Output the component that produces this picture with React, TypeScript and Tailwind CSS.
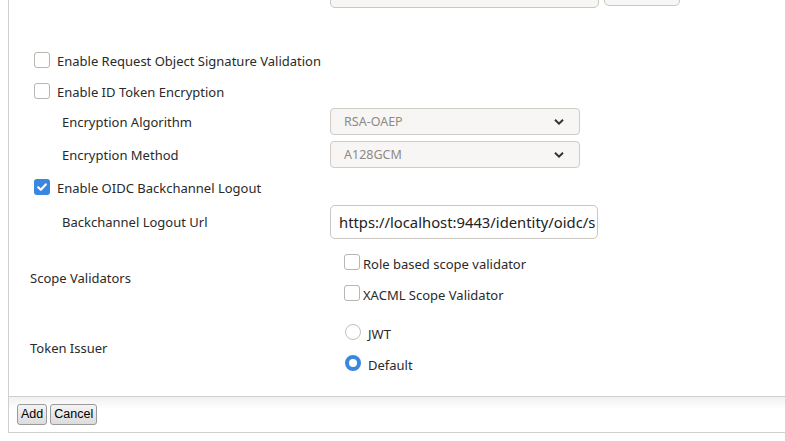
import React from "react";

const font = { fontFamily: '"Noto Sans", "Open Sans", sans-serif' };

function Box({ checked = false }: { checked?: boolean }) {
  if (checked) {
    return (
      <span className="inline-flex h-[16px] w-[16px] shrink-0 items-center justify-center rounded-[3px] bg-[#3b86e0]">
        <svg width="12" height="12" viewBox="0 0 12 12">
          <path d="M2.2 6.3 L4.8 8.8 L9.8 3.4" fill="none" stroke="white" strokeWidth="2.2" strokeLinecap="round" strokeLinejoin="round" />
        </svg>
      </span>
    );
  }
  return <span className="inline-block h-[16px] w-[16px] shrink-0 rounded-[3px] border border-[#b9b5b0] bg-white" />;
}

function Radio({ checked = false }: { checked?: boolean }) {
  if (checked) {
    return <span className="inline-block h-[16px] w-[16px] shrink-0 rounded-full border-[4.5px] border-[#3b86e0] bg-white" />;
  }
  return <span className="inline-block h-[16px] w-[16px] shrink-0 rounded-full border border-[#c2beb9] bg-white" />;
}

function Select({ value }: { value: string }) {
  return (
    <div className="flex h-[27px] w-[250px] items-center justify-between rounded-[4px] border border-[#cfcbc6] bg-[#f7f6f4] pl-[13px] pr-[14px] text-[12.5px] text-[#8d8a86]">
      <span>{value}</span>
      <svg width="12" height="8" viewBox="0 0 12 8">
        <path d="M2 1.8 L6 5.6 L10 1.8" fill="none" stroke="#333" strokeWidth="2" />
      </svg>
    </div>
  );
}

export default function App() {
  return (
    <div className="h-[441px] w-[785px] overflow-hidden bg-white text-[13px] leading-[20px] text-[#2a2a2a]" style={font}>
      <div className="ml-[8px] flex h-[433px] flex-col border-b border-l border-[#cfcfcf]">
        {/* top partial row */}
        <div className="mt-[-20px] flex h-[28px] shrink-0 items-start gap-[5px] pl-[321px]">
          <div className="h-[28px] w-[269px] rounded-[5px] border border-[#cac6c1] bg-[#f7f6f4]" />
          <div className="h-[26px] w-[76px] rounded-[5px] border border-[#cac6c1] bg-[#f7f6f4]" />
        </div>

        <div className="mt-[42px] flex h-[20px] shrink-0 items-center gap-[7px] pl-[25px]">
          <Box />
          <span className="mt-[2px]">Enable Request Object Signature Validation</span>
        </div>
        <div className="mt-[11px] flex h-[20px] shrink-0 items-center gap-[7px] pl-[25px]">
          <Box />
          <span className="mt-[2px]">Enable ID Token Encryption</span>
        </div>

        <div className="mt-[7px] flex h-[27px] shrink-0 items-center">
          <span className="w-[321px] pl-[53px]">Encryption Algorithm</span>
          <Select value="RSA-OAEP" />
        </div>
        <div className="mt-[6px] flex h-[27px] shrink-0 items-center">
          <span className="w-[321px] pl-[53px]">Encryption Method</span>
          <Select value="A128GCM" />
        </div>

        <div className="mt-[9px] flex h-[20px] shrink-0 items-center gap-[7px] pl-[25px]">
          <Box checked />
          <span className="mt-[2px]">Enable OIDC Backchannel Logout</span>
        </div>

        <div className="mt-[8px] flex h-[34px] shrink-0 items-center">
          <span className="w-[321px] pl-[53px]">Backchannel Logout Url</span>
          <div className="flex h-[34px] w-[268px] items-center overflow-hidden whitespace-nowrap rounded-[5px] border border-[#cac6c1] bg-white pl-[8px] text-[14.8px] text-[#222]">
            https://localhost:9443/identity/oidc/s
          </div>
        </div>

        <div className="mt-[13px] flex shrink-0 items-center">
          <span className="w-[335px] pl-[21px]">Scope Validators</span>
          <div className="flex flex-col gap-[11px]">
            <div className="flex h-[20px] items-center gap-[3px]">
              <Box />
              <span className="mt-[3px]">Role based scope validator</span>
            </div>
            <div className="flex h-[20px] items-center gap-[3px]">
              <Box />
              <span className="mt-[3px]">XACML Scope Validator</span>
            </div>
          </div>
        </div>

        <div className="mt-[19px] flex shrink-0 items-center">
          <span className="w-[336px] pl-[21px]">Token Issuer</span>
          <div className="flex flex-col gap-[11px]">
            <div className="flex h-[20px] items-center gap-[7px]">
              <Radio />
              <span className="mt-[4px]">JWT</span>
            </div>
            <div className="flex h-[20px] items-center gap-[7px]">
              <Radio checked />
              <span className="mt-[4px]">Default</span>
            </div>
          </div>
        </div>

        <div className="mt-[23px] flex-1 border-t border-[#cfcfcf] bg-[linear-gradient(#f1f1f1,#ffffff_12px)]">
          <div className="flex gap-[3px] pl-[8px] pt-[7px]" style={{ fontFamily: '"Liberation Sans", Arial, sans-serif' }}>
            <button className="h-[21px] rounded-[3px] border border-[#9a9a9a] bg-[linear-gradient(#f4f4f4,#dcdcdc)] px-[3px] text-[12.5px] leading-none text-black">
              Add
            </button>
            <button className="h-[21px] rounded-[3px] border border-[#9a9a9a] bg-[linear-gradient(#f4f4f4,#dcdcdc)] px-[3px] text-[12.5px] leading-none text-black">
              Cancel
            </button>
          </div>
        </div>
      </div>
    </div>
  );
}
